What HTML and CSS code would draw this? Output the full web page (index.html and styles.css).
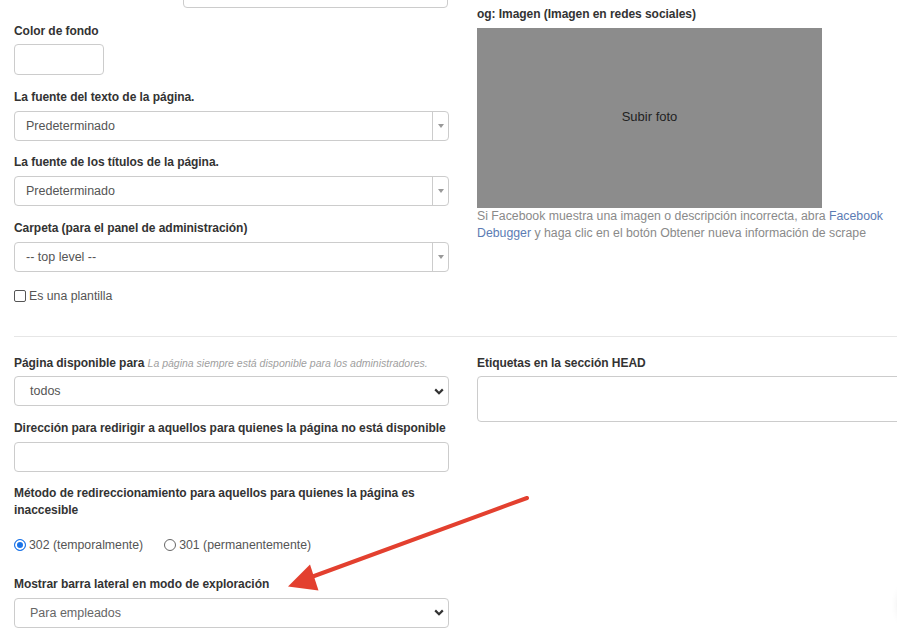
FILE: index.html
```html
<!DOCTYPE html>
<html lang="es">
<head>
<meta charset="utf-8">
<title>Configuración de página</title>
<link rel="stylesheet" href="styles.css">
</head>
<body>
<div class="page">
  <div class="row top-row">
    <div class="col">
      <div class="stub-input"></div>
      <div class="field">
        <label class="label first-top">Color de fondo</label>
        <div class="color-box"></div>
      </div>
      <div class="field">
        <label class="label">La fuente del texto de la página.</label>
        <div class="chosen"><span class="chosen-text">Predeterminado</span><span class="chosen-btn"></span></div>
      </div>
      <div class="field">
        <label class="label">La fuente de los títulos de la página.</label>
        <div class="chosen"><span class="chosen-text">Predeterminado</span><span class="chosen-btn"></span></div>
      </div>
      <div class="field">
        <label class="label">Carpeta (para el panel de administración)</label>
        <div class="chosen"><span class="chosen-text">-- top level --</span><span class="chosen-btn"></span></div>
      </div>
      <label class="check-row"><span class="checkbox"></span>Es una plantilla</label>
    </div>
    <div class="col">
      <label class="label og-label">og: Imagen (Imagen en redes sociales)</label>
      <div class="upload">Subir foto</div>
      <p class="help">Si Facebook muestra una imagen o descripción incorrecta, abra <a class="link"><span>Facebook</span> <span>Debugger</span></a> y haga clic en el botón Obtener nueva información de scrape</p>
    </div>
  </div>

  <hr class="divider">

  <div class="row bottom-row">
    <div class="col">
      <div class="b-field">
        <label class="label sel-label">Página disponible para <em class="note">La página siempre está disponible para los administradores.</em></label>
        <div class="nselect"><span>todos</span><svg class="chev" width="10" height="7" viewBox="0 0 10 7"><path d="M1.2 1.4L5 5.2L8.8 1.4" fill="none" stroke="#333" stroke-width="2.2"/></svg></div>
      </div>
      <div class="b-field">
        <label class="label">Dirección para redirigir a aquellos para quienes la página no está disponible</label>
        <div class="input"></div>
      </div>
      <div class="b-field radio-field">
        <label class="label">Método de redireccionamiento para aquellos para quienes la página es inaccesible</label>
        <div class="radios">
          <label class="radio-opt"><span class="radio checked"></span>302 (temporalmente)</label>
          <label class="radio-opt"><span class="radio"></span>301 (permanentemente)</label>
        </div>
      </div>
      <div class="b-field">
        <label class="label sel-label">Mostrar barra lateral en modo de exploración</label>
        <div class="nselect"><span class="muted">Para empleados</span><svg class="chev" width="10" height="7" viewBox="0 0 10 7"><path d="M1.2 1.4L5 5.2L8.8 1.4" fill="none" stroke="#333" stroke-width="2.2"/></svg></div>
      </div>
    </div>
    <div class="col">
      <label class="label sel-label">Etiquetas en la sección HEAD</label>
      <div class="textarea"></div>
    </div>
  </div>

  <svg class="arrow" width="897" height="636" viewBox="0 0 897 636">
    <line x1="527" y1="498" x2="306" y2="579" stroke="#e3402f" stroke-width="4" stroke-linecap="round"/>
    <polygon points="288,586.5 310,564.5 318.5,590.5" fill="#e3402f"/>
  </svg>
  <div class="fab"></div>
</div>
</body>
</html>
```

FILE: styles.css
```css
html, body {
  margin: 0;
  padding: 0;
  background: #fff;
}

body {
  font-family: "Liberation Sans", Arial, sans-serif;
  color: #333;
  width: 897px;
  height: 636px;
  overflow: hidden;
}

.page {
  position: relative;
  padding-left: 14px;
  height: 636px;
  overflow: hidden;
}

.row {
  display: grid;
  grid-template-columns: 435px 440px;
  column-gap: 28px;
}

.col {
  min-width: 0;
}

.label {
  display: block;
  font-weight: bold;
  font-size: 12px;
  letter-spacing: -0.05px;
  line-height: 17px;
  color: #333;
  margin-bottom: 5px;
}

/* top section */
.stub-input {
  margin-left: 169px;
  width: 265px;
  height: 30px;
  margin-top: -22px;
  margin-bottom: 15px;
  border: 1px solid #ccc;
  border-radius: 4px;
  box-sizing: border-box;
}

.first-top {
  margin-bottom: 4px;
}

.field {
  margin-bottom: 13.5px;
}

.color-box {
  width: 90px;
  height: 31px;
  border: 1px solid #ccc;
  border-radius: 4px;
  box-sizing: border-box;
}

.chosen {
  display: flex;
  height: 30px;
  border: 1px solid #ccc;
  border-radius: 4px;
  box-sizing: border-box;
}

.chosen-text {
  flex: 1;
  display: flex;
  align-items: center;
  padding-left: 11px;
  font-size: 12.5px;
  color: #555;
}

.chosen-btn {
  width: 15px;
  border-left: 1px solid #ccc;
  display: flex;
  align-items: center;
  justify-content: center;
}

.chosen-btn::before {
  content: "";
  border-left: 3px solid transparent;
  border-right: 3px solid transparent;
  border-top: 4px solid #999;
}

.check-row {
  display: flex;
  align-items: center;
  height: 17px;
  margin-top: 15.5px;
  font-size: 12.3px;
  color: #555;
}

.checkbox {
  width: 12px;
  height: 12px;
  box-sizing: border-box;
  border: 1px solid #555;
  border-radius: 2px;
  margin-right: 3px;
}

.og-label {
  margin-top: 6px;
}

.upload {
  width: 345px;
  height: 180px;
  background: #8c8c8c;
  display: flex;
  align-items: center;
  justify-content: center;
  padding-bottom: 4px;
  box-sizing: border-box;
  font-size: 13px;
  color: #222;
}

.help {
  margin: 0;
  font-size: 12.3px;
  line-height: 17px;
  color: #8a8a8a;
}

.link {
  color: #5c7cb4;
}

.divider {
  margin: 31.5px 0 0;
  border: 0;
  border-top: 1px solid #e6e6e6;
  height: 0;
}

/* bottom section */
.bottom-row {
  padding-top: 18px;
}

.b-field {
  margin-bottom: 13.5px;
}

.sel-label {
  margin-bottom: 4.5px;
}

.note {
  font-weight: normal;
  font-size: 10.5px;
  letter-spacing: 0;
  color: #a0a0a0;
}

.nselect {
  display: flex;
  align-items: center;
  justify-content: space-between;
  height: 30px;
  border: 1px solid #ccc;
  border-radius: 4px;
  box-sizing: border-box;
  padding: 0 4px 0 15px;
  font-size: 12.5px;
  color: #555;
}

.muted {
  color: #666;
}

.input {
  height: 30px;
  border: 1px solid #ccc;
  border-radius: 4px;
  box-sizing: border-box;
}

.radios {
  display: flex;
  gap: 21px;
  margin-top: 17px;
}

.radio-opt {
  display: flex;
  align-items: center;
  height: 17px;
  font-size: 12.3px;
  color: #555;
}

.radio {
  width: 12px;
  height: 12px;
  box-sizing: border-box;
  border: 1px solid #666;
  border-radius: 50%;
  margin-right: 3px;
}

.radio.checked {
  border: 1.5px solid #1a73e8;
  background: #1a73e8;
  box-shadow: inset 0 0 0 2px #fff;
}

.radio-field {
  margin-bottom: 23px;
}

.textarea {
  height: 46px;
  border: 1px solid #ccc;
  border-radius: 4px;
  box-sizing: border-box;
}

/* overlays */
.arrow {
  position: absolute;
  left: 0;
  top: 0;
  pointer-events: none;
}

.fab {
  position: absolute;
  left: 900px;
  top: 578px;
  width: 50px;
  height: 50px;
  border-radius: 50%;
  background: #fff;
  box-shadow: 0 2px 10px rgba(0, 0, 0, 0.16);
}
```
